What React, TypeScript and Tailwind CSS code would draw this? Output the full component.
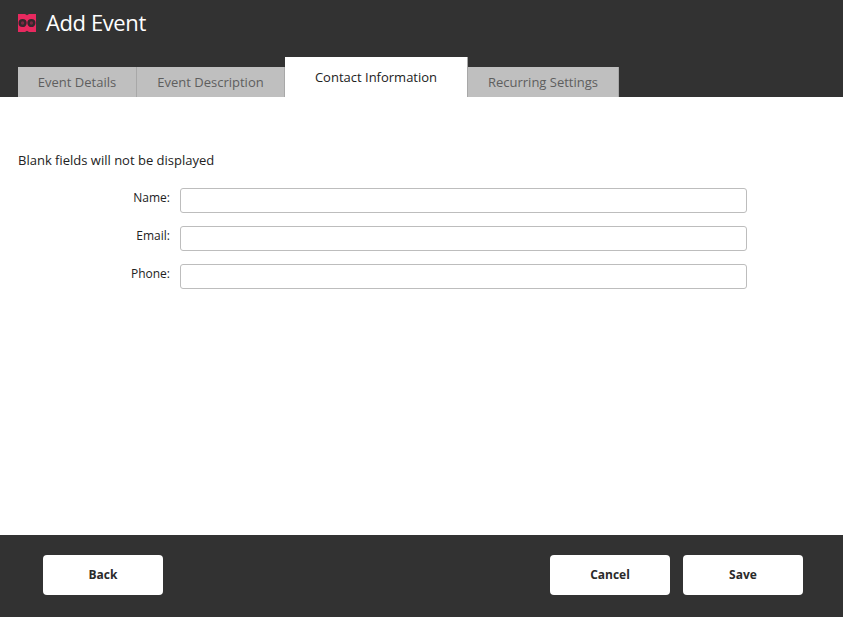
import React from 'react';

const tabs = [
  { label: 'Event Details', width: 'w-[119px]' },
  { label: 'Event Description', width: 'w-[148px]' },
  { label: 'Contact Information', width: 'w-[183px]', active: true },
  { label: 'Recurring Settings', width: 'w-[151px]' },
];

const fields = ['Name:', 'Email:', 'Phone:'];

const Logo = () => (
  <svg width="18" height="18" viewBox="0 0 18 18" className="shrink-0">
    <path d="M0 0h18v18H0z" fill="#e8295f" />
    <path d="M7 0h4l-2 1.2zM7 18h4l-2-1.2z" fill="#323232" />
    <circle cx="4.6" cy="9" r="2.9" fill="#7a2a42" stroke="#33282c" strokeWidth="2.4" />
    <circle cx="13.4" cy="9" r="2.9" fill="#7a2a42" stroke="#33282c" strokeWidth="2.4" />
  </svg>
);

const FooterButton = ({ label }: { label: string }) => (
  <button
    type="button"
    className="h-10 w-[120px] rounded-[4px] bg-white text-[12px] font-bold text-[#2a2a2a]"
  >
    {label}
  </button>
);

export default function App() {
  return (
    <div className="flex h-[619px] w-full flex-col bg-white font-['Open_Sans',sans-serif]">
      {/* Header */}
      <header className="flex h-[97px] shrink-0 flex-col justify-between bg-[#323232] pl-[18px]">
        <div className="flex h-[45px] items-center gap-[10px]">
          <Logo />
          <h1 className="pb-[1px] text-[22px] leading-none tracking-[-0.4px] text-white">Add Event</h1>
        </div>
        <nav className="flex items-end">
          {tabs.map((tab) =>
            tab.active ? (
              <div
                key={tab.label}
                className={`${tab.width} flex h-10 justify-center border-r border-[#a8a8a8] bg-white pt-[11px] text-[13px] leading-[18px] text-[#222222]`}
              >
                {tab.label}
              </div>
            ) : (
              <div
                key={tab.label}
                className={`${tab.width} flex h-[30px] items-center justify-center border-r border-[#a8a8a8] bg-[#bfbfbf] pt-[1px] text-[13px] text-[#5e5e5e]`}
              >
                {tab.label}
              </div>
            )
          )}
        </nav>
      </header>

      {/* Form */}
      <main className="flex-1 pl-[18px] pt-[55px]">
        <p className="text-[13px] leading-[17px] text-[#222222]">Blank fields will not be displayed</p>
        <div className="mt-[19px] flex flex-col gap-[13px]">
          {fields.map((field) => (
            <div key={field} className="flex items-center">
              <label className="w-[152px] pb-[6px] text-right text-[12px] text-[#222222]">{field}</label>
              <input
                type="text"
                className="ml-[10px] h-[25px] w-[567px] rounded-[3px] border border-[#bdbdbd] bg-white"
              />
            </div>
          ))}
        </div>
      </main>

      {/* Footer */}
      <footer className="mb-[2px] flex h-[82px] shrink-0 items-start justify-between bg-[#323232] pl-[43px] pr-10 pt-5">
        <FooterButton label="Back" />
        <div className="flex gap-[13px]">
          <FooterButton label="Cancel" />
          <FooterButton label="Save" />
        </div>
      </footer>
    </div>
  );
}
